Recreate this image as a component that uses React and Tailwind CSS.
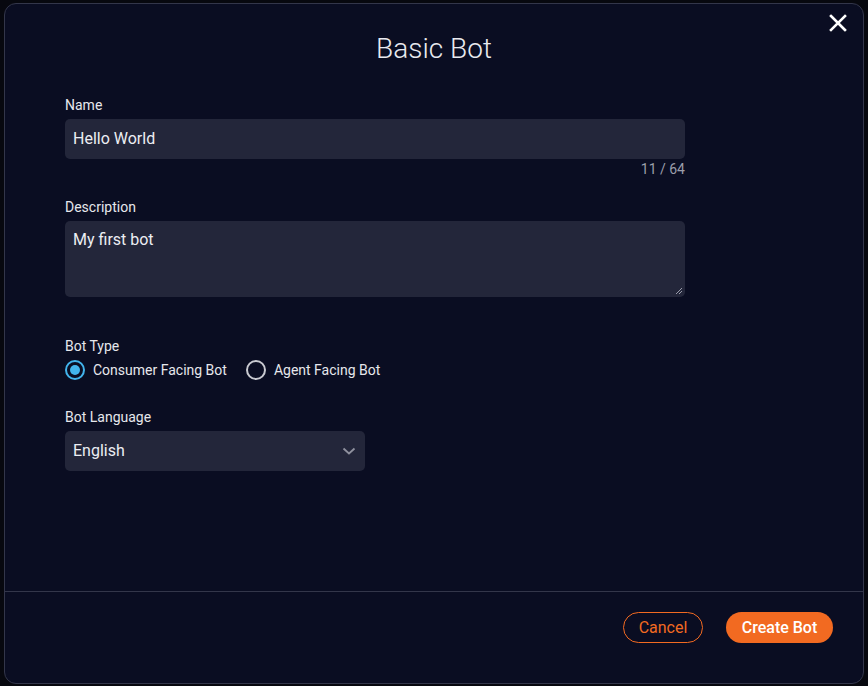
import React from "react";

function Radio({ checked, label }) {
  return (
    <label className="flex items-center gap-[8px]">
      <span
        className={
          "flex h-[20px] w-[20px] items-center justify-center rounded-full border-2 " +
          (checked ? "border-[#42b4ec]" : "border-[#c9cad1]")
        }
      >
        {checked && <span className="h-[10px] w-[10px] rounded-full bg-[#42b4ec]" />}
      </span>
      <span className="text-[14px] leading-[20px] text-[#e6e7ec]">{label}</span>
    </label>
  );
}

export default function App() {
  return (
    <div
      className="h-[686px] w-[868px] overflow-hidden bg-[#07080f] pl-[4px] pt-[3px]"
      style={{ fontFamily: "Roboto, 'Liberation Sans', sans-serif" }}
    >
      <div className="relative flex h-[681px] w-[860px] flex-col rounded-[12px] border border-[#33364a] bg-[#0a0d22]">
        <button className="absolute right-[14px] top-[8px] flex h-[22px] w-[22px] items-center justify-center">
          <svg width="18" height="18" viewBox="0 0 18 18">
            <path d="M2 2 L16 16 M16 2 L2 16" stroke="#ffffff" strokeWidth="2.6" strokeLinecap="square" />
          </svg>
        </button>

        <div className="flex-1">
          <h1 className="mt-[28px] text-center text-[28px] font-light leading-[34px] text-[#e9eaef]">
            Basic Bot
          </h1>

          <div className="w-[680px] pl-[60px]">
            <div className="mt-[31px] text-[14px] leading-[16px] text-[#e6e7ec]">Name</div>
            <div className="mt-[6px] flex h-[40px] items-center rounded-[5px] bg-[#23263a] px-[8px] text-[16px] text-[#eceef3]">
              Hello World
            </div>
            <div className="mt-[2px] text-right text-[14px] leading-[16px] text-[#9c9eab]">11 / 64</div>

            <div className="mt-[22px] text-[14px] leading-[16px] text-[#e6e7ec]">Description</div>
            <div className="relative mt-[6px] h-[76px] rounded-[5px] bg-[#23263a] px-[8px] pt-[9px] text-[16px] leading-[20px] text-[#eceef3]">
              My first bot
              <svg className="absolute bottom-[2px] right-[2px]" width="8" height="8" viewBox="0 0 8 8">
                <path d="M1 7 L7 1 M4 7 L7 4" stroke="#9a9cab" strokeWidth="1" />
              </svg>
            </div>

            <div className="mt-[41px] text-[14px] leading-[16px] text-[#e6e7ec]">Bot Type</div>
            <div className="mt-[6px] flex items-center gap-[19px]">
              <Radio checked label="Consumer Facing Bot" />
              <Radio label="Agent Facing Bot" />
            </div>

            <div className="mt-[29px] text-[14px] leading-[16px] text-[#e6e7ec]">Bot Language</div>
            <div className="mt-[6px] flex h-[40px] w-[300px] items-center justify-between rounded-[5px] bg-[#23263a] pl-[8px] pr-[9px] text-[16px] text-[#eceef3]">
              <span>English</span>
              <svg width="14" height="8" viewBox="0 0 14 8">
                <path d="M1.5 1.5 L7 6.5 L12.5 1.5" fill="none" stroke="#8f919e" strokeWidth="1.8" />
              </svg>
            </div>
          </div>
        </div>

        <div className="flex h-[92px] items-start justify-end gap-[23px] border-t border-[#33364a] pr-[30px] pt-[20px]">
          <button className="flex h-[31px] w-[80px] items-center justify-center rounded-full border border-[#f26a21] text-[16px] text-[#f26a21]">
            Cancel
          </button>
          <button className="flex h-[31px] w-[107px] items-center justify-center rounded-full bg-[#f26a21] text-[16px] font-medium text-white">
            Create Bot
          </button>
        </div>
      </div>
    </div>
  );
}
